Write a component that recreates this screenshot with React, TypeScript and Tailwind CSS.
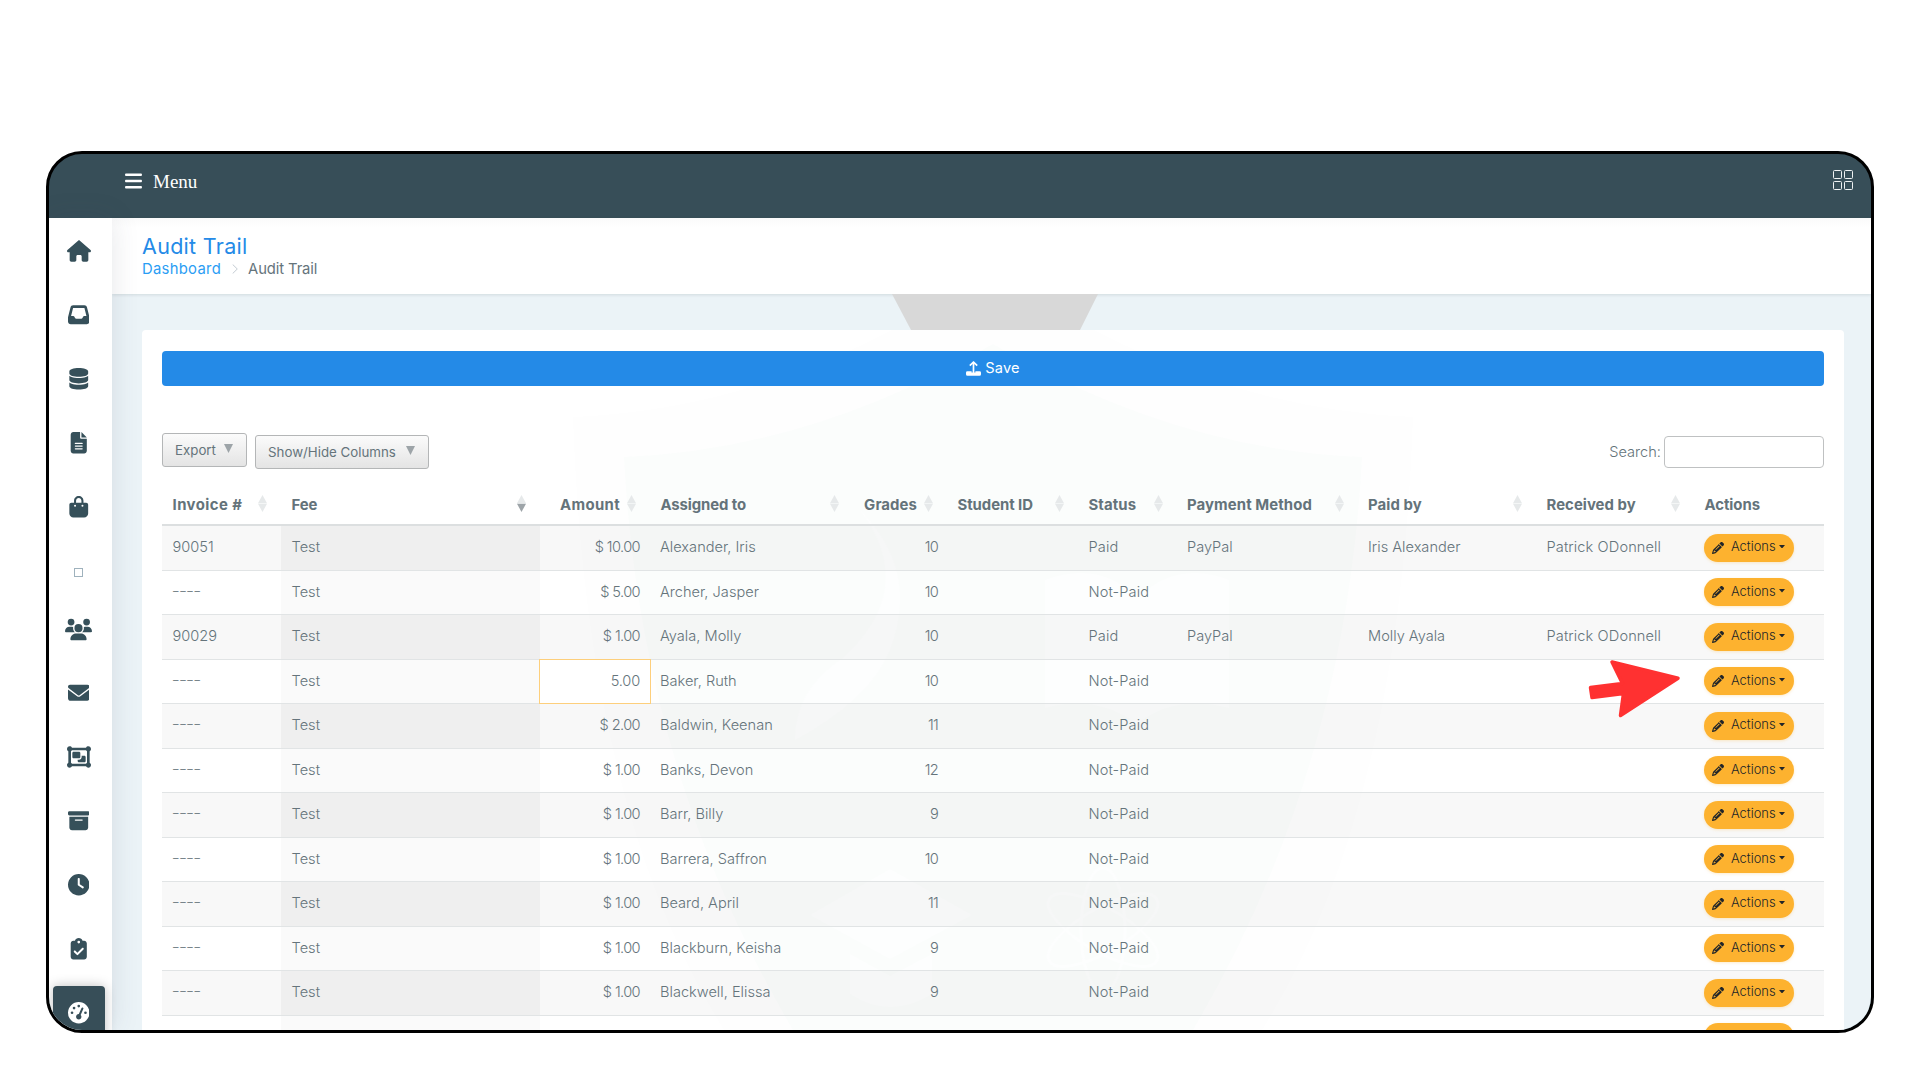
import type { ComponentType, ReactNode } from "react";
import {
  FaBagShopping,
  FaBars,
  FaBoxArchive,
  FaClipboardCheck,
  FaClock,
  FaDatabase,
  FaEnvelope,
  FaFileLines,
  FaGaugeHigh,
  FaHouse,
  FaInbox,
  FaObjectGroup,
  FaPencil,
  FaUsers,
} from "react-icons/fa6";

type Icon = ComponentType<{ className?: string }>;

type Fee = {
  invoice?: string;
  amount: string;
  name: string;
  grade: string;
  status: string;
  method?: string;
  paidBy?: string;
  receivedBy?: string;
  editing?: boolean;
};

const fees: Fee[] = [
  { invoice: "90051", amount: "$ 10.00", name: "Alexander, Iris", grade: "10", status: "Paid", method: "PayPal", paidBy: "Iris Alexander", receivedBy: "Patrick ODonnell" },
  { amount: "$ 5.00", name: "Archer, Jasper", grade: "10", status: "Not-Paid" },
  { invoice: "90029", amount: "$ 1.00", name: "Ayala, Molly", grade: "10", status: "Paid", method: "PayPal", paidBy: "Molly Ayala", receivedBy: "Patrick ODonnell" },
  { amount: "5.00", name: "Baker, Ruth", grade: "10", status: "Not-Paid", editing: true },
  { amount: "$ 2.00", name: "Baldwin, Keenan", grade: "11", status: "Not-Paid" },
  { amount: "$ 1.00", name: "Banks, Devon", grade: "12", status: "Not-Paid" },
  { amount: "$ 1.00", name: "Barr, Billy", grade: "9", status: "Not-Paid" },
  { amount: "$ 1.00", name: "Barrera, Saffron", grade: "10", status: "Not-Paid" },
  { amount: "$ 1.00", name: "Beard, April", grade: "11", status: "Not-Paid" },
  { amount: "$ 1.00", name: "Blackburn, Keisha", grade: "9", status: "Not-Paid" },
  { amount: "$ 1.00", name: "Blackwell, Elissa", grade: "9", status: "Not-Paid" },
];

const columns: { label: string; right?: boolean; sort?: "none" | "desc"; tracking: string }[] = [
  { label: "Invoice #", sort: "none", tracking: "tracking-[0.45px]" },
  { label: "Fee", sort: "desc", tracking: "tracking-[-0.1px]" },
  { label: "Amount", right: true, sort: "none", tracking: "tracking-[0.35px]" },
  { label: "Assigned to", sort: "none", tracking: "tracking-[-0.1px]" },
  { label: "Grades", right: true, sort: "none", tracking: "tracking-[0.1px]" },
  { label: "Student ID", sort: "none", tracking: "tracking-[-0.05px]" },
  { label: "Status", sort: "none", tracking: "tracking-[0.1px]" },
  { label: "Payment Method", sort: "none", tracking: "tracking-[0.1px]" },
  { label: "Paid by", sort: "none", tracking: "tracking-[0.1px]" },
  { label: "Received by", sort: "none", tracking: "tracking-[0.05px]" },
  { label: "Actions", tracking: "tracking-[-0.05px]" },
];

const rowGrid = "grid grid-cols-[119px_259px_110px_203px_94px_131px_98.5px_181px_178.5px_158px_130px]";

function SidebarItem({ icon: IconComponent, className }: { icon: Icon; className: string }) {
  return (
    <div className="flex h-16 w-full shrink-0 items-center justify-center">
      <IconComponent className={className} />
    </div>
  );
}

function Sidebar() {
  return (
    <aside className="relative z-10 flex w-[62.5px] shrink-0 flex-col items-center bg-white pt-[1.5px] pr-[3.5px] text-[#36505a] shadow-[0_0_28px_rgba(60,70,90,0.13)]">
      <SidebarItem icon={FaHouse} className="size-6" />
      <SidebarItem icon={FaInbox} className="size-[21.5px]" />
      <SidebarItem icon={FaDatabase} className="size-[21.5px]" />
      <SidebarItem icon={FaFileLines} className="size-[21.5px]" />
      <SidebarItem icon={FaBagShopping} className="size-[21.5px]" />
      <div className="flex h-[58px] w-full shrink-0 justify-center pt-[29px]">
        <div className="size-[9px] border border-[#9fb2bd]" />
      </div>
      <SidebarItem icon={FaUsers} className="size-[27px]" />
      <SidebarItem icon={FaEnvelope} className="size-[21.5px]" />
      <SidebarItem icon={FaObjectGroup} className="size-6" />
      <SidebarItem icon={FaBoxArchive} className="size-[21.5px]" />
      <SidebarItem icon={FaClock} className="size-[21.5px]" />
      <SidebarItem icon={FaClipboardCheck} className="size-[21.5px]" />
      <div className="mt-[5px] flex h-[54px] w-[52px] shrink-0 items-center justify-center rounded-[4px] bg-[#374e58] text-white shadow-[0_0_12px_rgba(0,0,0,0.25)]">
        <FaGaugeHigh className="size-[21.5px]" />
      </div>
    </aside>
  );
}

function SortIcon({ desc }: { desc?: boolean }) {
  return (
    <svg className="h-[17px] w-[9px] shrink-0" viewBox="0 0 9 17">
      <path d="M4.5 0 9 8.2H0z" fill="#e6e9ea" />
      <path d="M4.5 17 0 8.8h9z" fill={desc ? "#9da4a8" : "#e6e9ea"} />
    </svg>
  );
}

function ToolbarButton({ children, className }: { children: ReactNode; className: string }) {
  return (
    <button
      type="button"
      className={`flex h-[34px] justify-between rounded-[3px] border border-[#b4b6b7] bg-[linear-gradient(#fbfbfb,#e4e4e4)] pr-[13px] pl-3 text-[13.3px] ${className}`}
    >
      <span className="leading-[32px]">{children}</span>
      <svg className="mt-2.5 h-[9px] w-[9px]" viewBox="0 0 9 9">
        <path d="M0 0h9L4.5 9z" fill="#9da4a8" />
      </svg>
    </button>
  );
}

function ActionsButton() {
  return (
    <button
      type="button"
      className="mt-[7.5px] flex h-7 w-[90px] items-center rounded-full bg-[#fdb22f] pl-2 text-[#212529] shadow-[0_1px_3px_rgba(253,178,47,0.25)]"
    >
      <FaPencil className="size-3" />
      <span className="ml-[7px] pb-px text-[12.9px]">Actions</span>
      <svg className="mb-0.5 ml-[3px] h-[3.5px] w-[6px]" viewBox="0 0 6 3.5">
        <path d="M0 0h6L3 3.5z" fill="currentColor" />
      </svg>
    </button>
  );
}

// faint school crest behind the table
function Crest() {
  return (
    <svg className="absolute top-0 left-[398px] h-[700px] w-[906px]" viewBox="0 0 906 700" fill="none">
      <path d="M33 87Q250 78 453 -60 656 78 873 87 860 480 722 700H184Q46 480 33 87z" fill="#fefefe" />
      <path d="M84 127Q270 120 453 14 636 120 822 127 806 440 653 700H253Q100 440 84 127z" fill="#fbfdfc" />
      <g fill="#fdfefe">
        <path d="M320 180Q380 260 300 330 255 360 255 410 330 370 350 320 380 240 320 180z" />
        <path d="M505 250q55-20 92 18 40-38 92-18v128q-55-14-92 16-40-30-92-16z" />
        <path d="M270 585l80-46 82 46-82 44zM310 624l40 22 42-22v40q-42 26-82 0z" />
      </g>
      <g stroke="#fdfefe" strokeWidth="3">
        <ellipse cx="563" cy="600" rx="22" ry="62" />
        <ellipse cx="563" cy="600" rx="22" ry="62" transform="rotate(60 563 600)" />
        <ellipse cx="563" cy="600" rx="22" ry="62" transform="rotate(120 563 600)" />
      </g>
    </svg>
  );
}

function FeeRow({ fee, odd }: { fee: Fee; odd: boolean }) {
  return (
    <div
      className={`${rowGrid} h-[44.5px] border-b border-[#e1e4e5] leading-[42px] ${odd ? "bg-black/[0.027]" : ""}`}
    >
      <div className="pl-[10.5px]">
        {fee.invoice ?? (
          <span className="-ml-px text-[19px] leading-[38px] font-extralight tracking-[-1.3px]">----</span>
        )}
      </div>
      <div className={`pl-[10.5px] ${odd ? "bg-[#efefef]" : "bg-[#fafafa]"}`}>Test</div>
      {fee.editing ? (
        <div className="-m-px border border-[#fdcf7c] bg-white pr-2.5 text-right tracking-[-0.2px]">{fee.amount}</div>
      ) : (
        <div className="pr-2.5 text-right tracking-[-0.6px]">{fee.amount}</div>
      )}
      <div className="pl-[10px]">{fee.name}</div>
      <div className="pr-[9px] text-right tracking-[-0.7px]">{fee.grade}</div>
      <div />
      <div className="pl-[10.5px] tracking-[0.1px]">{fee.status}</div>
      <div className="pl-[10.5px]">{fee.method}</div>
      <div className="pl-[10.5px]">{fee.paidBy}</div>
      <div className="pl-[10.5px] tracking-[0.1px]">{fee.receivedBy}</div>
      <div className="pl-2.5">
        <ActionsButton />
      </div>
    </div>
  );
}

function FeeTable() {
  return (
    <div className="mt-[13.5px] text-[14.6px] font-light">
      <div className={`${rowGrid} h-[43.5px] border-b-2 border-[#dcdfe0] text-[14.9px] font-bold text-[#64737a]`}>
        {columns.map((column) => (
          <div
            key={column.label}
            className={`flex items-center pr-3.5 pl-[10.5px] ${column.right ? "justify-end gap-[7px]" : "justify-between"}`}
          >
            <span className={`pt-[3px] whitespace-nowrap ${column.tracking}`}>{column.label}</span>
            {column.sort ? <SortIcon desc={column.sort === "desc"} /> : null}
          </div>
        ))}
      </div>
      {fees.map((fee, index) => (
        <FeeRow key={fee.name} fee={fee} odd={index % 2 === 0} />
      ))}
      <div className={`${rowGrid} h-[44.5px]`}>
        <div />
        <div className="bg-[#fafafa]" />
        <div className="col-span-8" />
        <div className="pl-2.5">
          <ActionsButton />
        </div>
      </div>
    </div>
  );
}

export default function App() {
  return (
    <div className="relative h-[1080px] w-[1920px] overflow-hidden bg-white pt-[151px] pl-[46px] font-['Inter',sans-serif] text-[#65747b]">
      <div className="flex h-[882px] w-[1828px] flex-col overflow-hidden rounded-[36px] border-3 border-black bg-[#374e58]">
        <header className="flex h-[63.5px] shrink-0 justify-between pt-[15px] pr-[18px] pl-[76px] text-white">
          <div className="flex h-6 items-center">
            <FaBars className="h-5 w-[17px]" preserveAspectRatio="none" />
            <span className="ml-[11px] pt-0.5 font-['Liberation_Serif',serif] text-[19px] leading-6">Menu</span>
          </div>
          <div className="mt-px grid h-5 w-5 grid-cols-2 gap-[2px]">
            {[0, 1, 2, 3].map((cell) => (
              <span key={cell} className="rounded-[1.5px] border border-[#eef1f2]" />
            ))}
          </div>
        </header>

        <div className="flex min-h-0 flex-1">
          <Sidebar />
          <main className="flex min-w-0 flex-1 flex-col bg-[#ebf3f7]">
            <div className="h-[76.5px] shrink-0 bg-[linear-gradient(#fafafa,#fff_10px)] pt-[14px] pl-[30.5px] shadow-[0_1px_3px_rgba(50,70,80,0.14)]">
              <h1 className="text-[21.5px] leading-[28px] tracking-[0.3px] text-[#248ae7]">Audit Trail</h1>
              <div className="flex items-center text-[14.8px] leading-[19px]">
                <span className="tracking-[0.3px] text-[#2a9df4]">Dashboard</span>
                <svg className="mr-[10px] ml-[11px] h-2.5 w-[6px]" viewBox="0 0 6 10" fill="none">
                  <path d="M.7.5 5.3 5 .7 9.5" stroke="#c3cbd2" />
                </svg>
                <span className="tracking-[-0.1px]">Audit Trail</span>
              </div>
            </div>

            <div className="flex h-9 shrink-0 justify-center pl-[7px]">
              <svg className="h-9 w-[206px]" viewBox="0 0 206 36">
                <path d="M0 0h206l-18 36H19z" fill="#d8d8d8" />
              </svg>
            </div>

            <section className="relative mr-[27px] ml-[30.5px] flex-1 overflow-hidden rounded-t-[4px] bg-white">
              <Crest />
              <div className="relative px-5 pt-[20.5px]">
                <button
                  type="button"
                  className="flex h-[35.5px] w-full items-center justify-center gap-1 rounded-[4px] bg-[#248ae7] text-[14.6px] text-white"
                >
                  <svg className="size-[15px]" viewBox="0 0 15 15" fill="none">
                    <path d="M7.5 12V1.5M3.8 4.7 7.5 1l3.7 3.7" stroke="#fff" strokeWidth="1.7" strokeLinejoin="round" />
                    <path d="M1.6 10.2h4v1.3h3.8v-1.3h4A1.5 1.5 0 0 1 15 11.7v1.5a1.5 1.5 0 0 1-1.5 1.5h-12A1.5 1.5 0 0 1 0 13.2v-1.5a1.5 1.5 0 0 1 1.6-1.5z" fill="#fff" />
                  </svg>
                  <span className="pt-0.5 tracking-[0.2px]">Save</span>
                </button>

                <div className="mt-[47px] flex h-9 justify-between">
                  <div className="flex gap-2">
                    <ToolbarButton className="w-[85px]">Export</ToolbarButton>
                    <ToolbarButton className="mt-0.5 w-[174px]">Show/Hide Columns</ToolbarButton>
                  </div>
                  <label className="mt-[3px] flex h-8 items-center gap-[3px] text-[14.6px] font-light">
                    <span className="pt-px">Search:</span>
                    <input type="text" className="h-8 w-[160px] rounded-[4px] border border-[#bfc1c2] bg-white" />
                  </label>
                </div>

                <FeeTable />
              </div>
            </section>
          </main>
        </div>
      </div>

      <svg className="absolute top-[655px] left-[1584px] h-[66px] w-[100px]" viewBox="0 0 100 66">
        <path
          d="M28 7 94 23.3 36.5 60.5 39.5 38.5 8 42.5 6.5 32.5 38.5 28.5z"
          fill="#ff3131"
          stroke="#ff3131"
          strokeWidth="3.5"
          strokeLinejoin="round"
        />
      </svg>
    </div>
  );
}
